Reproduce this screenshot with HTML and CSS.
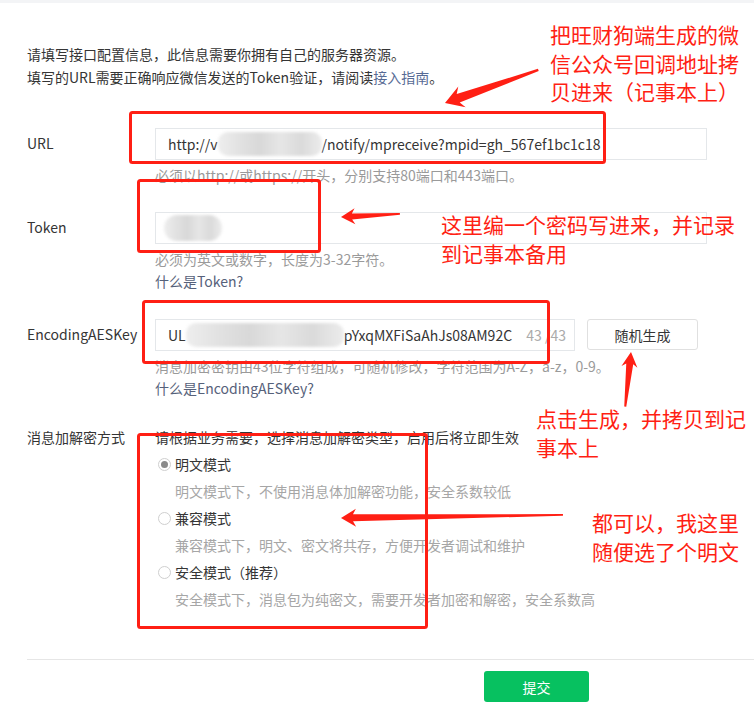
FILE: index.html
```html
<!DOCTYPE html>
<html lang="zh-CN">
<head>
    <meta charset="UTF-8">
    <meta name="viewport" content="width=device-width, initial-scale=1.0">
    <title>服务器配置</title>
    <link rel="stylesheet" href="styles.css">
</head>
<body>
    <div class="top-bar"></div>
    <div class="page">
        <p class="intro">
            请填写接口配置信息，此信息需要你拥有自己的服务器资源。<br>
            填写的URL需要正确响应微信发送的Token验证，请阅读<a href="#">接入指南</a>。
        </p>

        <!-- URL -->
        <div class="form-row url-row">
            <label class="form-label">URL</label>
            <div class="form-field">
                <div class="input url-input">http://v<span class="mosaic mosaic-url"></span>/notify/mpreceive?mpid=gh_567ef1bc1c18</div>
                <p class="help">必须以http://或https://开头，分别支持80端口和443端口。</p>
            </div>
        </div>

        <!-- Token -->
        <div class="form-row token-row">
            <label class="form-label">Token</label>
            <div class="form-field">
                <div class="input token-input"><span class="mosaic mosaic-token"></span></div>
                <p class="help">必须为英文或数字，长度为3-32字符。</p>
                <a class="help-link" href="#">什么是Token?</a>
            </div>
        </div>

        <!-- EncodingAESKey -->
        <div class="form-row aes-row">
            <label class="form-label">EncodingAESKey</label>
            <div class="form-field">
                <div class="aes-line">
                    <div class="input aes-input">
                        <span class="aes-value">UL<span class="mosaic mosaic-aes"></span>pYxqMXFiSaAhJs08AM92C</span>
                        <span class="counter">43 /43</span>
                    </div>
                    <button class="btn-default">随机生成</button>
                </div>
                <p class="help">消息加密密钥由43位字符组成，可随机修改，字符范围为A-Z，a-z，0-9。</p>
                <a class="help-link" href="#">什么是EncodingAESKey?</a>
            </div>
        </div>

        <!-- 加解密方式 -->
        <div class="form-row mode-row">
            <label class="form-label">消息加解密方式</label>
            <div class="form-field">
                <p class="mode-tip">请根据业务需要，选择消息加解密类型，启用后将立即生效</p>
                <div class="radio checked"><i></i>明文模式</div>
                <p class="radio-desc">明文模式下，不使用消息体加解密功能，安全系数较低</p>
                <div class="radio"><i></i>兼容模式</div>
                <p class="radio-desc">兼容模式下，明文、密文将共存，方便开发者调试和维护</p>
                <div class="radio"><i></i>安全模式（推荐）</div>
                <p class="radio-desc">安全模式下，消息包为纯密文，需要开发者加密和解密，安全系数高</p>
            </div>
        </div>

        <div class="form-footer">
            <button class="btn-primary">提交</button>
        </div>
    </div>

    <!-- 标注 -->
    <svg class="marks" width="754" height="711" viewBox="0 0 754 711">
        <g fill="none" stroke="#ff1f14" stroke-width="3">
            <rect x="130.5" y="112.5" width="474" height="50" rx="2"/>
            <rect x="138.5" y="180.5" width="181" height="71" rx="2"/>
            <rect x="143.5" y="301.5" width="405" height="61" rx="2"/>
            <rect x="138.5" y="434.5" width="288" height="193" rx="2"/>
        </g>
        <g fill="#ff1f14">
            <polygon transform="translate(445,103) rotate(-19.5)" points="0,0 18,-11 14,-4.5 99,-1.2 99,1.2 14,4.5 18,11"/>
            <polygon transform="translate(341,217) rotate(-3)" points="0,0 14,-8 11,-3 59,-0.8 59,0.8 11,3 14,8"/>
            <polygon transform="translate(631,352) rotate(96)" points="0,0 15,-8 12,-3.5 55,-1 55,1 12,3.5 15,8"/>
            <polygon transform="translate(341,518) rotate(-0.8)" points="0,0 15,-9 12,-3.5 222,-0.8 222,0.8 12,3.5 15,9"/>
        </g>
    </svg>
    <div class="note note-url">把旺财狗端生成的微<br>信公众号回调地址拷<br>贝进来（记事本上）</div>
    <div class="note note-token">这里编一个密码写进来，并记录<br>到记事本备用</div>
    <div class="note note-aes">点击生成，并拷贝到记<br>事本上</div>
    <div class="note note-mode">都可以，我这里<br>随便选了个明文</div>
</body>
</html>
```

FILE: styles.css
```css
body{
    margin:0;
    background:#fff;
    font-family:"Noto Sans CJK SC","Noto Sans",sans-serif;
    font-size:14px;
    color:#353535;
}
p{margin:0}
a{color:#576b95;text-decoration:none}

.top-bar{
    height:3px;
    background:#f3f4f6;
}
.page{
    padding:40px 0 0 27px;
}
.intro{
    line-height:23px;
}

.form-row{
    display:grid;
    grid-template-columns:128px 1fr;
}
.form-label{
    line-height:30px;
}
.url-row{margin-top:39px}
.token-row{margin-top:26px}
.aes-row{margin-top:27px}
.mode-row{margin-top:25px}

.input{
    box-sizing:border-box;
    height:32px;
    width:552px;
    border:1px solid #e4e7ea;
    padding:0 12px;
    line-height:30px;
    white-space:nowrap;
    overflow:hidden;
    display:flex;
    align-items:center;
}
.help{
    margin-top:4px;
    line-height:22px;
    color:#9a9a9a;
}
.help-link{
    display:block;
    line-height:22px;
    color:#56617a;
}

/* 打码区域 */
.mosaic{
    display:inline-block;
    height:24px;
    background:linear-gradient(90deg,#eeeeee 0,#e2e2e2 20%,#d8d8d8 40%,#e6e6e6 60%,#dadada 80%,#ececec 100%);
    filter:blur(1.5px);
    border-radius:10px;
}
.mosaic-url{width:104px}
.mosaic-token{width:58px;height:26px;margin-left:-4px;border-radius:13px}
.mosaic-aes{width:158px}

.aes-line{
    display:flex;
    gap:12px;
}
.aes-input{
    width:420px;
    justify-content:space-between;
    padding-right:8px;
}
.aes-value{display:flex;align-items:center}
.counter{color:#ababab}

.btn-default{
    width:111px;
    height:31px;
    background:#fff;
    border:1px solid #e0e0e0;
    border-radius:3px;
    font:inherit;
    color:#353535;
}

.mode-row .form-label,
.mode-tip,
.radio,
.radio-desc{
    line-height:27px;
}
.radio{
    display:flex;
    align-items:center;
    padding-left:3px;
}
.radio i{
    box-sizing:border-box;
    width:13px;
    height:13px;
    border:1px solid #cfcfcf;
    border-radius:50%;
    margin-right:4px;
    display:flex;
    align-items:center;
    justify-content:center;
}
.radio.checked i::after{
    content:"";
    width:7px;
    height:7px;
    border-radius:50%;
    background:#8a8a8a;
}
.radio-desc{
    padding-left:20px;
    color:#a6a6a6;
}

.form-footer{
    margin-top:46px;
    border-top:1px solid #e6e6e6;
    padding:11px 0 0 457px;
}
.btn-primary{
    width:105px;
    height:31px;
    border:0;
    border-radius:3px;
    background:#07c160;
    color:#fff;
    font:inherit;
}

/* 红色标注，覆盖在页面上 */
.marks{
    position:absolute;
    left:0;
    top:0;
    pointer-events:none;
}
.note{
    position:absolute;
    color:#ff1f14;
    font-size:21px;
    line-height:28.5px;
    white-space:nowrap;
}
.note-url{left:550px;top:20px}
.note-token{left:441px;top:210px}
.note-aes{left:536px;top:404px}
.note-mode{left:592px;top:508px}
```
